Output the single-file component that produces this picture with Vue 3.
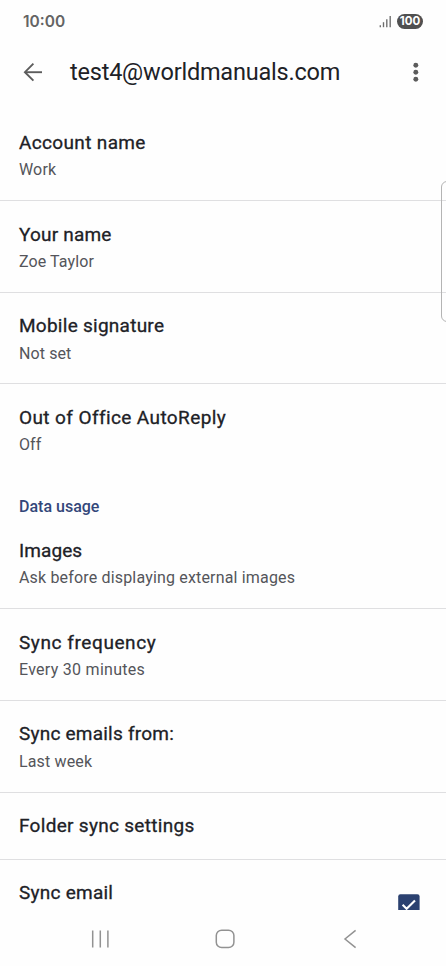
<script setup>
const general = [
  { title: 'Account name', value: 'Work', h: 92, pad: 21, ts: 0.35, vs: 0.15 },
  { title: 'Your name', value: 'Zoe Taylor', h: 92, pad: 21, ts: 0.2, vs: 0.1 },
  { title: 'Mobile signature', value: 'Not set', h: 91, pad: 20, ts: 0.26, vs: 0.1 },
  { title: 'Out of Office AutoReply', value: 'Off', h: 92, pad: 21, ts: 0.4, vs: 0.1 },
]
const usage = [
  { title: 'Images', value: 'Ask before displaying external images', h: 92, pad: 21, ts: 0.08, vs: 0.17 },
  { title: 'Sync frequency', value: 'Every 30 minutes', h: 92, pad: 21, ts: 0.58, vs: 0.28 },
  { title: 'Sync emails from:', value: 'Last week', h: 92, pad: 20, ts: 0.22, vs: 0.15 },
  { title: 'Folder sync settings', h: 67, pad: 20, ts: 0.3 },
  { title: 'Sync email', h: 92, pad: 20, ts: 0.25, checked: true },
]
const px = (n) => (n || 0) + 'px'
</script>

<template>
  <div class="screen">
    <header class="status">
      <span class="clock">10:00</span>
      <div class="indicators">
        <svg width="13" height="13" viewBox="0 0 13 13">
          <g stroke="#6c6c6c" stroke-width="1.35">
            <path d="M1.3 12.2V10.3" /><path d="M4.5 12.2V7.2" />
            <path d="M7.8 12.2V4.2" /><path d="M11.2 12.2V1" />
          </g>
        </svg>
        <span class="battery">100</span>
      </div>
    </header>

    <div class="appbar">
      <svg width="20" height="20" viewBox="0 0 20 20" fill="none" stroke="#5c5c5c" stroke-width="1.9">
        <path d="M19 10.2H2" /><path d="M10.4 1.7L1.9 10.2L10.4 18.7" />
      </svg>
      <h1>test4@worldmanuals.com</h1>
      <svg width="6" height="20" viewBox="0 0 6 20" fill="#5c5c5c">
        <circle cx="2.8" cy="3.3" r="2.45" /><circle cx="2.8" cy="10.3" r="2.45" /><circle cx="2.8" cy="17.3" r="2.45" />
      </svg>
    </div>

    <main>
      <section>
        <div v-for="r in general" :key="r.title" class="row" :style="{ height: px(r.h) }">
          <div class="title" :style="{ paddingTop: px(r.pad) }">
            <span :style="{ letterSpacing: px(r.ts) }">{{ r.title }}</span>
          </div>
          <div class="value"><span :style="{ letterSpacing: px(r.vs) }">{{ r.value }}</span></div>
        </div>
      </section>
      <h2>Data usage</h2>
      <section>
        <div v-for="r in usage" :key="r.title" class="row" :style="{ height: px(r.h) }">
          <div class="title" :style="{ paddingTop: px(r.pad) }">
            <span :style="{ letterSpacing: px(r.ts) }">{{ r.title }}</span>
          </div>
          <div v-if="r.value" class="value"><span :style="{ letterSpacing: px(r.vs) }">{{ r.value }}</span></div>
          <svg v-if="r.checked" class="check" width="22" height="22" viewBox="0 0 22 22">
            <rect x="0.2" y="0.2" width="21.4" height="21.4" rx="2.2" fill="#2b4170" />
            <path d="M4.6 10.8L8.6 14.8L17 6.4" fill="none" stroke="#fff" stroke-width="2.1" />
          </svg>
        </div>
      </section>
    </main>

    <nav>
      <svg width="20" height="20" viewBox="0 0 20 20" stroke="#929292" stroke-width="1.5">
        <path d="M2.7 1.5V18.5M10.3 1.5V18.5M17.9 1.5V18.5" />
      </svg>
      <svg width="20" height="20" viewBox="0 0 20 20" fill="none" stroke="#929292" stroke-width="1.5">
        <rect x="1.3" y="1.2" width="17.6" height="17.4" rx="5.4" />
      </svg>
      <svg width="20" height="20" viewBox="0 0 20 20" fill="none" stroke="#929292" stroke-width="1.5">
        <path d="M15.6 1.3L5 10L15.6 18.7" />
      </svg>
    </nav>

    <div class="edge-handle"></div>
  </div>
</template>

<style scoped>
.screen {
  position: relative;
  width: 446px;
  height: 966px;
  display: flex;
  flex-direction: column;
  overflow: hidden;
  background: #fefefe;
  color: #202126;
  font-family: Roboto, "Liberation Sans", sans-serif;
}
.status {
  height: 42px;
  box-sizing: border-box;
  padding: 0 23px;
  display: flex;
  align-items: center;
  justify-content: space-between;
}
.clock {
  font-family: Inter, sans-serif;
  font-size: 15.5px;
  font-weight: 600;
  color: #646464;
}
.indicators {
  display: flex;
  align-items: center;
  gap: 5px;
}
.battery {
  width: 26px;
  height: 15px;
  border-radius: 8px;
  background: #505050;
  color: #fff;
  font-family: Inter, sans-serif;
  font-size: 11.5px;
  font-weight: 700;
  line-height: 15px;
  text-align: center;
}
.appbar {
  height: 60px;
  box-sizing: border-box;
  padding: 0 27px 0 23px;
  display: flex;
  align-items: center;
}
h1 {
  flex: 1;
  margin: 0 0 0 27px;
  font-size: 23.5px;
  line-height: 30px;
  font-weight: 400;
  letter-spacing: -0.21px;
  white-space: nowrap;
}
main {
  height: 808px;
  padding-top: 7px;
  box-sizing: border-box;
  overflow: hidden;
}
.row {
  position: relative;
  box-sizing: border-box;
  padding: 0 19px;
  border-bottom: 1px solid #dfdfe1;
  white-space: nowrap;
}
.row:last-child {
  border-bottom: 0;
}
.title {
  height: 50px;
  box-sizing: border-box;
  font-size: 19px;
  line-height: 26px;
  font-weight: 400;
  -webkit-text-stroke: 0.3px #202126;
}
.value {
  height: 22px;
  font-size: 16px;
  line-height: 22px;
  color: #54555a;
}
h2 {
  height: 41px;
  margin: 0;
  padding: 20px 19px 0;
  box-sizing: border-box;
  font-size: 16px;
  line-height: 22px;
  font-weight: 500;
  color: #33477a;
}
.check {
  position: absolute;
  right: 26px;
  top: 34px;
}
nav {
  height: 56px;
  padding: 2px 86px 0 90px;
  box-sizing: border-box;
  display: flex;
  align-items: center;
  justify-content: space-between;
}
.edge-handle {
  position: absolute;
  left: 441px;
  top: 181px;
  width: 12px;
  height: 141px;
  box-sizing: border-box;
  border: 1px solid #b4b4b4;
  border-radius: 6px;
}
</style>

<style>
body {
  background: #fefefe;
}
</style>
